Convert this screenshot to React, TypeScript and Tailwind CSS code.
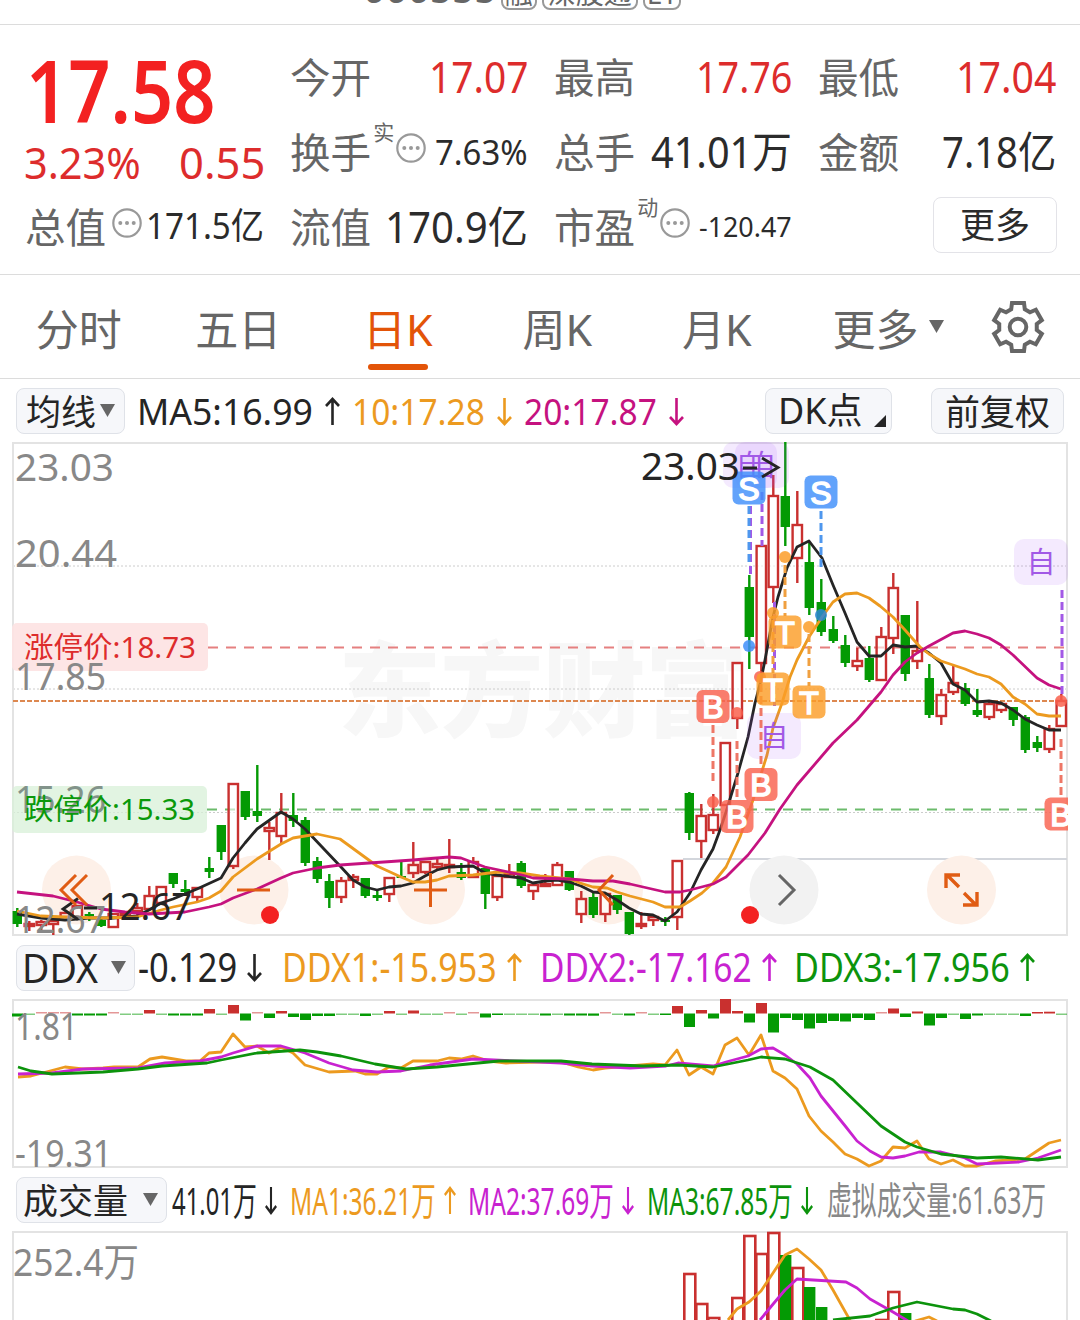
import { useLayoutEffect, useRef, useState } from "react";
import type { ReactNode } from "react";
import clsx from "clsx";

const RED = "#c9302f";
const GREEN = "#049a04";
const BLACK = "#252525";
const ORANGE = "#ec9a1f";
const MAGENTA = "#c5127f";
const VIOLET = "#c822d0";
const DEEP_GREEN = "#0c930c";

const STEP = 12;
const cx = (i: number) => 17.3 + i * STEP;

// [up, body top, body bottom, high, low]
const candles: [number, number, number, number, number][] = [
  [0, 911, 924, 908, 927], [1, 924, 926, 921, 931], [1, 922, 925, 920, 930], [1, 921, 924, 920, 935],
  [1, 913, 917, 913, 917], [1, 906, 917, 906, 917], [0, 914, 916, 912, 921], [0, 920, 926, 917, 927],
  [1, 914, 927, 914, 927], [1, 913, 915, 911, 917], [1, 908, 911, 903, 915], [1, 896, 909, 886, 910],
  [1, 887, 903, 887, 903], [0, 873, 884, 873, 888], [0, 889, 892, 880, 896], [1, 888, 897, 888, 902],
  [0, 868, 872, 857, 878], [0, 825, 852, 825, 860], [1, 784, 866, 784, 869], [0, 791, 817, 791, 820],
  [0, 811, 816, 765, 822], [1, 828, 831, 822, 860], [1, 813, 836, 793, 843], [0, 815, 821, 793, 827],
  [0, 820, 863, 817, 866], [0, 861, 879, 857, 883], [0, 881, 898, 874, 908], [1, 881, 897, 877, 903],
  [1, 877, 880, 874, 888], [0, 878, 896, 878, 898], [0, 895, 898, 891, 901], [1, 878, 894, 878, 902],
  [0, 876, 878, 862, 878], [1, 865, 873, 842, 878], [1, 862, 872, 862, 874], [1, 864, 867, 859, 870],
  [1, 865, 867, 839, 873], [0, 872, 878, 863, 880], [1, 862, 877, 857, 877], [0, 868, 894, 868, 909],
  [1, 876, 897, 876, 901], [1, 874, 877, 864, 877], [0, 863, 886, 861, 888], [1, 885, 891, 883, 900],
  [1, 884, 886, 874, 887], [1, 865, 885, 862, 885], [0, 871, 890, 871, 891], [1, 899, 914, 891, 923],
  [0, 897, 915, 892, 918], [1, 894, 914, 893, 922], [0, 895, 910, 895, 914], [0, 912, 934, 912, 935],
  [1, 924, 926, 912, 929], [1, 917, 920, 917, 926], [0, 920, 922, 917, 926], [1, 861, 917, 861, 930],
  [0, 793, 833, 792, 840], [1, 816, 841, 804, 858], [1, 815, 830, 794, 834], [1, 743, 805, 743, 805],
  [1, 663, 718, 663, 729], [0, 587, 637, 575, 669], [1, 546, 663, 546, 680], [1, 496, 587, 475, 603],
  [0, 496, 527, 442, 546], [1, 525, 558, 491, 583], [0, 562, 608, 543, 615], [0, 602, 632, 579, 636],
  [0, 629, 641, 616, 643], [0, 645, 663, 635, 667], [1, 661, 666, 648, 671], [0, 658, 680, 646, 682],
  [1, 637, 680, 627, 680], [1, 588, 638, 573, 654], [0, 615, 674, 615, 681], [1, 651, 661, 601, 669],
  [0, 678, 715, 664, 718], [1, 695, 716, 689, 725], [1, 683, 692, 666, 695], [0, 688, 704, 683, 706],
  [0, 710, 715, 689, 717], [1, 704, 717, 701, 720], [1, 704, 710, 704, 713], [0, 707, 720, 707, 726],
  [0, 717, 750, 715, 753], [0, 742, 748, 736, 752], [1, 729, 749, 725, 753], [1, 701, 726, 694, 727],
];

const ma5 =
  "17,914 41,918 65,920 89,918 113,918 137,916 149,910 161,903 173,899 197,889 221,878 233,858 245,843 257,829 281,812 293,819 305,829 341,867 353,880 365,887 377,890 389,887 401,886 413,883 425,876 437,870 449,867 473,866 485,873 497,875 521,878 533,883 545,881 557,880 569,882 581,886 593,892 605,893 617,900 629,908 641,914 653,915 665,921 677,912 690,893 701,870 713,849 720,830 726,812 738,773 748,737 755,703 761,680 765,660 773,617 778,597 787,568 797,547 809,541 822,558 833,585 845,613 857,642 869,656 881,656 893,645 905,647 917,646 929,653 941,663 953,684 965,690 977,702 989,701 1001,703 1013,710 1025,719 1037,725 1049,730 1061,730";
const ma10 =
  "17,911 41,916 65,917 101,918 137,917 161,910 173,907 197,902 209,898 221,891 233,877 257,859 281,844 293,838 317,834 340,839 377,866 401,877 413,882 425,882 437,880 449,876 473,875 498,872 520,873 540,876 570,879 580,883 593,887 607,888 617,892 630,896 653,902 665,907 680,907 690,901 702,893 713,883 726,867 740,837 753,800 767,755 773,728 782,703 790,677 797,660 809,637 822,617 833,602 845,594 857,593 869,598 880,606 893,617 905,630 920,647 929,654 941,661 965,669 977,674 989,677 1001,684 1013,697 1025,704 1037,714 1049,716 1061,716";
const ma20 =
  "17,892 53,896 77,902 101,909 125,912 149,914 185,912 209,907 221,904 233,898 257,889 281,878 293,873 317,868 340,865 413,860 449,857 461,858 485,867 522,875 533,878 570,879 593,881 613,881 630,884 665,892 680,892 690,890 713,884 726,877 748,855 765,833 780,809 797,785 833,743 857,720 881,692 893,675 905,662 917,653 929,646 953,633 965,631 977,634 989,638 1001,645 1013,655 1037,678 1049,685 1061,689";

// one entry per day, positive bars grow upwards
const ddxBars = [
  -3, -1, 1, 1, 1, -2, -2, -2, 1, -1, -1, 3.5, -1, -2, -2, -2, 4.5, -1, 8.5, -7, 1, -4.5, 2.5, -3.5, -6.5, -2.5,
  -2.5, -1, -1, -2.5, -1, 2.5, -1, 3, -1, -1, 1, -1, 1.2, -4, -1.5, -1, -1, -1, -2, -1, -2, -2, -2.2, 1, -1, -2, 1,
  -1, -1.5, 7.5, -13.5, 3.5, -5, 14.5, 2.5, -9, 10.5, -19, -4.5, -6.5, -15, -9.5, -7.5, -8, -4.5, -6.5, 1, 5, -3.5,
  2, -12, -4.5, -1, -5.5, -2, -1, -1, -1, -2.5, 1.5, 1.8, -1,
];

const ddx1 =
  "18,1077 31,1076 65,1067 83,1069 103,1068 114,1067 138,1067 150,1059 162,1057 186,1061 200,1061 209,1053 221,1052 233,1034 245,1047 257,1046 269,1053 281,1047 293,1053 305,1065 329,1072 355,1071 365,1074 377,1074 389,1067 401,1068 413,1061 437,1061 449,1058 461,1059 473,1056 489,1061 506,1063 540,1062 561,1062 578,1067 593,1070 605,1068 653,1064 665,1065 677,1050 689,1075 701,1067 713,1074 725,1045 737,1038 749,1055 761,1035 773,1071 785,1078 797,1089 809,1116 821,1131 833,1142 845,1154 857,1159 869,1166 881,1161 893,1147 905,1148 917,1141 929,1159 941,1164 953,1160 965,1166 977,1166 995,1161 1025,1159 1037,1151 1049,1143 1061,1140";
const ddx2 =
  "18,1074 52,1073 83,1069 138,1068 165,1063 200,1061 221,1057 233,1053 257,1046 281,1046 305,1053 329,1063 353,1070 377,1072 401,1071 430,1065 473,1059 540,1062 561,1063 592,1066 630,1068 666,1066 678,1063 713,1066 726,1062 748,1056 761,1049 773,1048 785,1055 797,1064 810,1078 821,1096 846,1127 857,1141 870,1151 881,1157 893,1158 905,1156 919,1152 941,1152 965,1158 977,1164 1019,1162 1038,1158 1061,1150";
const ddx3 =
  "18,1067 31,1071 52,1074 103,1072 138,1069 162,1066 207,1063 221,1060 257,1053 300,1050 317,1052 341,1056 375,1064 406,1069 437,1067 499,1061 561,1061 592,1064 643,1066 678,1065 713,1067 748,1060 761,1057 785,1059 810,1067 833,1080 857,1103 881,1126 905,1142 917,1147 941,1154 977,1158 1001,1157 1038,1160 1061,1157";

// [day index, up, bar top]
const volumes: [number, number, number][] = [
  [56, 1, 1274], [57, 1, 1304], [58, 1, 1318], [60, 1, 1298], [61, 1, 1236], [62, 1, 1254], [63, 1, 1233],
  [64, 0, 1255], [65, 1, 1268], [66, 0, 1287], [67, 0, 1307], [72, 1, 1320], [73, 1, 1292], [74, 0, 1313],
];

// Squeezes or stretches a run of text to the given width.
const Fit = ({ w, className, children }: { w: number; className?: string; children: ReactNode }) => {
  const ref = useRef<HTMLSpanElement>(null);
  const [scale, setScale] = useState(1);
  useLayoutEffect(() => {
    if (ref.current) setScale(w / ref.current.offsetWidth);
  }, [w]);
  return (
    <span className={clsx("inline-block shrink-0", className)} style={{ width: w }}>
      <span ref={ref} className="mb-[3px] inline-block origin-left whitespace-nowrap" style={{ transform: `scaleX(${scale})` }}>
        {children}
      </span>
    </span>
  );
};

const Info = () => (
  <svg width="30" height="30" viewBox="0 0 30 30" className="shrink-0">
    <circle cx="15" cy="15" r="13.7" fill="none" stroke="#999" strokeWidth="2.2" />
    {[8.3, 15, 21.7].map((x) => (
      <circle key={x} cx={x} cy="15" r="2" fill="#999" />
    ))}
  </svg>
);

const Triangle = ({ className }: { className?: string }) => (
  <svg width="15" height="13" viewBox="0 0 15 13" className={className}>
    <path d="M0 0H15L7.5 13Z" fill="#666" />
  </svg>
);

const Arrow = ({ up, w = 15, color }: { up?: boolean; w?: number; color: string }) => (
  <svg width={w} height="30" viewBox="0 0 15 30" preserveAspectRatio="none" className="shrink-0">
    <path
      d={up ? "M7.5 28V2M1 9L7.5 2L14 9" : "M7.5 1V27M1 20L7.5 27L14 20"}
      fill="none"
      stroke={color}
      strokeWidth="2.6"
    />
  </svg>
);

const Gear = () => {
  const pts: string[] = [];
  for (let k = 0; k < 6; k++) {
    for (const [r, off] of [[19, -21], [24.8, -14], [24.8, 14], [19, 21]]) {
      const a = ((k * 60 + off - 90) * Math.PI) / 180;
      pts.push(`${27 + r * Math.cos(a)},${27 + r * Math.sin(a)}`);
    }
  }
  return (
    <svg width="54" height="54" viewBox="0 0 54 54" fill="none" stroke="#666" strokeWidth="4">
      <polygon points={pts.join(" ")} />
      <circle cx="27" cy="27" r="8.3" />
    </svg>
  );
};

const Label = ({ children }: { children: string }) => (
  <span className="shrink-0 pt-[2px] text-[40.6px] text-[#666]">{children}</span>
);

const Pill = ({ className, children }: { className?: string; children: ReactNode }) => (
  <div className={clsx("flex h-[46px] shrink-0 items-center rounded-lg border border-[#dfe2e8] bg-[#f6f7fa] text-[#252525]", className)}>
    {children}
  </div>
);

const Line = ({ points, color }: { points: string; color: string }) => (
  <polyline points={points} fill="none" stroke={color} strokeWidth="2.8" strokeLinejoin="round" />
);

const AxisText = ({ x = 15, y, w, color = "#888", children }: { x?: number; y: number; w: number; color?: string; children: string }) => (
  <text x={x} y={y} fontSize="39" fill={color} textLength={w} lengthAdjust="spacingAndGlyphs">
    {children}
  </text>
);

const Stem = ({ x, y1, y2, color }: { x: number; y1: number; y2: number; color: string }) => (
  <line x1={x} x2={x} y1={y1} y2={y2} stroke={color} strokeWidth="3" strokeDasharray="8 4" />
);

const marks = [
  { t: "B", x: 713, y: 706.5, color: "#f9624e" },
  { t: "B", x: 761, y: 784.5, color: "#f9624e" },
  { t: "B", x: 737, y: 816.5, color: "#f9624e" },
  { t: "B", x: 1061, y: 814, color: "#f9624e" },
  { t: "S", x: 749, y: 488, color: "#3f8ffa" },
  { t: "S", x: 821, y: 492, color: "#3f8ffa" },
  { t: "T", x: 785, y: 632, color: "#fb9d28" },
  { t: "T", x: 773, y: 689, color: "#fb9d28" },
  { t: "T", x: 809, y: 702, color: "#fb9d28" },
];

const dots: [number, number, string][] = [
  [749, 646, "#3f8ffa"], [821, 615, "#2f86d8"], [785, 557, "#fb9d28"], [773, 613, "#fb9d28"], [809, 627, "#fb9d28"],
  [713, 802, "#f9624e"], [737, 713, "#f9624e"], [760, 677, "#f9624e"], [1061, 701, "#f9624e"],
];

const SelfTag = ({ x, y }: { x: number; y: number }) => (
  <g>
    <rect x={x - 27} y={y - 23} width="54" height="46" rx="10" fill="#a855f7" fillOpacity="0.12" />
    <text x={x} y={y + 11} fontSize="29" textAnchor="middle" fill="#a259e6">自</text>
  </g>
);

const KChart = () => (
  <svg className="ml-3 block shrink-0" width="1056" height="494" viewBox="12 442 1056 494">
    <text x="338" y="729" fontSize="103" fontWeight="900" fill="#f7f7f7" textLength="410">东方财富</text>
    <g stroke="#ccc" strokeDasharray="2 2">
      <path d="M13 566H1067M13 689H1067M13 812.5H1067" />
    </g>
    <rect x="13" y="443" width="1054" height="492" fill="none" stroke="#e3e3e3" strokeWidth="2" />
    <path d="M683 859H1067" stroke="#d3d6dc" strokeWidth="2" />
    {[76.5, 254, 430.5, 608.5, 961.5].map((x) => (
      <circle key={x} cx={x} cy="890" r="34.5" fill="#fdf0e8" />
    ))}
    <circle cx="784" cy="890" r="34.5" fill="#f2f2f2" />

    <path d="M208 647.5H1067" stroke="#e58080" strokeWidth="1.8" strokeDasharray="10 8" />
    <path d="M207 809.5H1067" stroke="#6cbb6c" strokeWidth="1.8" strokeDasharray="10 8" />
    <path d="M13 701H1067" stroke="#dd8850" strokeWidth="2" strokeDasharray="5 2" />

    {candles.map(([up, top, bottom, high, low], i) => {
      const x = cx(i);
      return up ? (
        <g key={i} stroke={RED} strokeWidth="2.4" fill="#fff">
          <path d={`M${x} ${high}V${top}M${x} ${bottom}V${low}`} />
          <rect x={x - 4.7} y={top} width="9.4" height={bottom - top} fillOpacity="0.6" />
        </g>
      ) : (
        <g key={i} fill={GREEN}>
          <rect x={x - 1.2} y={high} width="2.4" height={low - high} />
          <rect x={x - 4.7} y={top} width="9.4" height={bottom - top} />
        </g>
      );
    })}

    <Line points={ma5} color={BLACK} />
    <Line points={ma10} color={ORANGE} />
    <Line points={ma20} color={MAGENTA} />

    <rect x="12" y="623" width="196" height="48" rx="5" fill="#fde3e3" fillOpacity="0.92" />
    <text x="24" y="658" fontSize="29" fill="#dd2c2c" textLength="172" lengthAdjust="spacingAndGlyphs">涨停价:18.73</text>
    <rect x="12" y="786" width="195" height="47" rx="5" fill="#d8f0d8" fillOpacity="0.75" />
    <AxisText y={481} w={99}>23.03</AxisText>
    <AxisText y={567} w={102}>20.44</AxisText>
    <AxisText y={690} w={91}>17.85</AxisText>
    <AxisText y={813} w={91} color="#82938a">15.26</AxisText>
    <AxisText y={933} w={91}>12.67</AxisText>
    <text x="24" y="820" fontSize="29" fill="#0a990a" textLength="171" lengthAdjust="spacingAndGlyphs">跌停价:15.33</text>

    <SelfTag x={750} y={465} />
    <SelfTag x={762} y={465} />
    <SelfTag x={774} y={736} />
    <SelfTag x={1041} y={562} />
    <Stem x={750.5} y1={506} y2={578} color="#a259e6" />
    <Stem x={762} y1={492} y2={546} color="#a259e6" />
    <Stem x={774.5} y1={602} y2={706} color="#a259e6" />
    <Stem x={1062} y1={590} y2={694} color="#a259e6" />
    <Stem x={749} y1={506} y2={565} color="#4f97ee" />
    <Stem x={821} y1={511} y2={568} color="#4f97ee" />
    <Stem x={785} y1={565} y2={616} color="#f0a040" />
    <Stem x={773} y1={620} y2={673} color="#f0a040" />
    <Stem x={809} y1={634} y2={686} color="#f0a040" />
    <Stem x={713} y1={725} y2={784} color="#ee7766" />
    <Stem x={737} y1={741} y2={800} color="#ee7766" />
    <Stem x={761} y1={684} y2={768} color="#ee7766" />
    <Stem x={1061} y1={739} y2={798} color="#ee7766" />
    {dots.map(([x, y, color]) => (
      <circle key={`${x}-${y}`} cx={x} cy={y} r="6" fill={color} fillOpacity="0.85" />
    ))}
    {marks.map(({ t, x, y, color }) => (
      <g key={`${x}-${y}`}>
        <rect x={x - 16.5} y={y - 16.5} width="33" height="33" rx="6" fill={color} fillOpacity="0.82" />
        <text x={x} y={y + 11.5} fontSize="32" fill="#fff" stroke="#fff" strokeWidth="1.6" textAnchor="middle" className="font-['Liberation_Sans',sans-serif]">
          {t}
        </text>
      </g>
    ))}

    <AxisText x={641} y={480} w={99} color={BLACK}>23.03</AxisText>
    <path d="M743 468H757M762 458L778 467.5L762 477" fill="none" stroke={BLACK} strokeWidth="2.8" />
    <AxisText x={99} y={920} w={93} color={BLACK}>12.67</AxisText>
    <path d="M84 908H97M78 898.500L63 909L78 919.500" fill="none" stroke={BLACK} strokeWidth="2.8" />

    <g fill="none" stroke="#e05c14" strokeWidth="3">
      <path d="M76 875L61 890L76 905M87 875L72 890L87 905" />
      <path d="M237 890H270M414 890H447M430.500 873V907M613 875L599 890L613 905" />
      <path d="M946 888V875H960M947 875L959 887M964 893L976 905M977 892V905H963" strokeWidth="3.4" />
    </g>
    <path d="M779 875L794 890L779 905" fill="none" stroke="#666" strokeWidth="3" />
    <circle cx="270" cy="915" r="9" fill="#f32121" />
    <circle cx="750" cy="915" r="9" fill="#f32121" />
  </svg>
);

const DdxChart = () => (
  <svg className="ml-3 block shrink-0" width="1056" height="169" viewBox="12 999 1056 169">
    <rect x="13" y="1000" width="1054" height="167" fill="none" stroke="#e3e3e3" strokeWidth="2" />
    {ddxBars.map((v, i) => {
      const h = Math.max(Math.abs(v), 1.5);
      return (
        <rect
          key={i}
          x={cx(i) - 5.3}
          y={v > 0 ? 1013.5 - h : 1013.5}
          width="11"
          height={h}
          fill={v > 0 ? RED : GREEN}
          fillOpacity={Math.abs(v) < 1.5 ? 0.5 : 1}
        />
      );
    })}
    <AxisText y={1040} w={63}>1.81</AxisText>
    <AxisText y={1167} w={97}>-19.31</AxisText>
    <Line points={ddx1} color={ORANGE} />
    <Line points={ddx2} color={VIOLET} />
    <Line points={ddx3} color={DEEP_GREEN} />
  </svg>
);

const VolumeChart = () => (
  <svg className="ml-3 block shrink-0" width="1056" height="89" viewBox="12 1231 1056 89">
    <rect x="13" y="1232" width="1054" height="120" fill="none" stroke="#e3e3e3" strokeWidth="2" />
    <AxisText x={13} y={1276} w={126}>252.4万</AxisText>
    {volumes.map(([i, up, top]) => (
      <rect
        key={i}
        x={cx(i) - (up ? 5 : 5.3)}
        y={top}
        width={up ? 11 : 11.4}
        height="100"
        fill={up ? "#fff" : GREEN}
        stroke={up ? RED : "none"}
        strokeWidth="2.6"
      />
    ))}
    <Line points="728,1320 737,1309 749,1302 761,1291 773,1273 785,1255 797,1249 809,1259 821,1270 833,1290 851,1322" color={ORANGE} />
    <Line points="915,1321 929,1317 937,1321" color={ORANGE} />
    <Line points="760,1320 774,1303 785,1290 797,1279 846,1282 857,1288 870,1299 893,1312 908,1321" color={VIOLET} />
    <Line points="833,1320 870,1316 893,1308 917,1302 953,1309 965,1310 977,1314 991,1321" color={DEEP_GREEN} />
  </svg>
);

const App = () => (
  <div className="flex h-[1320px] w-[1080px] flex-col overflow-hidden bg-white font-['Noto_Sans','Noto_Sans_CJK_SC',sans-serif] leading-none text-[#2b2b2b]">
    <header className="flex h-[25px] shrink-0 items-end justify-center overflow-hidden border-b border-[#dcdcdc] pb-[14px] text-[#666]">
      <div className="flex items-end gap-[5px] pr-[36px]">
        <Fit w={133} className="text-[38px]">000555</Fit>
        <span className="rounded-lg border-2 border-[#999] px-[2px] pb-[1px] text-[28px]">融</span>
        <span className="rounded-lg border-2 border-[#999] px-[4px] pb-[1px] text-[28px]">深股通</span>
        <span className="rounded-lg border-2 border-[#999] px-[2px] pb-[1px] text-[28px]">L1</span>
      </div>
    </header>

    <section className="flex h-[250px] shrink-0 border-b border-[#dcdcdc] pt-[15px] pl-[26px]">
      <div className="w-[264px]">
        <div className="flex h-[93px] items-center pt-[9px]">
          <Fit w={190} className="text-[86px] font-semibold text-[#f32121]">17.58</Fit>
        </div>
        <div className="-ml-[2px] flex h-[57px] w-[241px] items-center justify-between pt-[4px] text-[44px] text-[#dd2c2c]">
          <Fit w={117}>3.23%</Fit>
          <Fit w={86}>0.55</Fit>
        </div>
        <div className="-ml-px flex h-[75px] w-[239px] items-center justify-between">
          <Label>总值</Label>
          <div className="pb-[9px] pl-[2px]"><Info /></div>
          <Fit w={118} className="text-[36px]">171.5亿</Fit>
        </div>
      </div>

      <div className="w-[264px]">
        <div className="flex h-[75px] w-[238px] items-center justify-between">
          <Label>今开</Label>
          <Fit w={99} className="text-[44px] text-[#dd2c2c]">17.07</Fit>
        </div>
        <div className="flex h-[75px] w-[238px] items-center">
          <Label>换手</Label>
          <span className="ml-[2px] pb-[40px] text-[21px] text-[#666]">实</span>
          <div className="ml-[2px] pb-[9px]"><Info /></div>
          <Fit w={93} className="ml-auto text-[35px]">7.63%</Fit>
        </div>
        <div className="flex h-[75px] w-[238px] items-center justify-between">
          <Label>流值</Label>
          <Fit w={143} className="text-[43px]">170.9亿</Fit>
        </div>
      </div>

      <div className="w-[264px]">
        <div className="flex h-[75px] w-[238px] items-center justify-between">
          <Label>最高</Label>
          <Fit w={96} className="text-[44px] text-[#dd2c2c]">17.76</Fit>
        </div>
        <div className="flex h-[75px] w-[238px] items-center justify-between">
          <Label>总手</Label>
          <Fit w={141} className="text-[43px]">41.01万</Fit>
        </div>
        <div className="flex h-[75px] w-[238px] items-center">
          <Label>市盈</Label>
          <span className="ml-[2px] pb-[40px] text-[21px] text-[#666]">动</span>
          <div className="ml-[2px] pb-[9px]"><Info /></div>
          <Fit w={93} className="ml-auto text-[28px]">-120.47</Fit>
        </div>
      </div>

      <div className="w-[238px]">
        <div className="flex h-[75px] items-center justify-between">
          <Label>最低</Label>
          <Fit w={100} className="text-[44px] text-[#dd2c2c]">17.04</Fit>
        </div>
        <div className="flex h-[75px] items-center justify-between">
          <Label>金额</Label>
          <Fit w={114} className="text-[43px]">7.18亿</Fit>
        </div>
        <div className="flex h-[75px] items-center justify-end">
          <button className="-mr-px mb-[6px] h-[56px] w-[124px] rounded-lg border border-[#e3e3e8] text-[35px]">更多</button>
        </div>
      </div>
    </section>

    <nav className="flex h-[104px] shrink-0 items-center border-b border-[#dcdcdc] text-[43px] text-[#666]">
      {["分时", "五日", "日K", "周K", "月K"].map((tab) => (
        <div
          key={tab}
          className={clsx("relative flex h-full w-[159.500px] items-center justify-center pt-[6px] pr-[2px]", tab === "日K" && "text-[#e35408]")}
        >
          {tab}
          {tab === "日K" && <span className="absolute bottom-[8px] left-[49px] h-[6px] w-[60px] rounded-full bg-[#e35408]" />}
        </div>
      ))}
      <div className="ml-[35px] flex items-center gap-[10px] pt-[6px]">
        更多
        <Triangle className="mb-[6px]" />
      </div>
      <div className="ml-[47px]"><Gear /></div>
    </nav>

    <div className="flex h-[63px] shrink-0 items-center pl-4 text-[37px]">
      <Pill className="w-[109px] gap-[4px] pl-[9px] text-[35px]">
        <span className="pt-[2px]">均线</span>
        <Triangle />
      </Pill>
      <div className="flex items-center gap-[12px] pt-[2px] pl-[12px]">
        <Fit w={176} className="text-[#252525]">MA5:16.99</Fit>
        <Arrow up color={BLACK} />
        <Fit w={133} className="text-[#ec9a1f]">10:17.28</Fit>
        <Arrow color={ORANGE} />
        <Fit w={133} className="text-[#c5127f]">20:17.87</Fit>
        <Arrow color={MAGENTA} />
      </div>
      <Pill className="ml-auto w-[127px] justify-between pr-[5px] pl-[12px] text-[36px]">
        <Fit w={85} className="pt-[3px]">DK点</Fit>
        <svg width="12" height="12" className="mt-[20px]"><path d="M12 0V12H0Z" fill={BLACK} /></svg>
      </Pill>
      <Pill className="mr-4 ml-[39px] w-[133px] justify-center pt-[2px] text-[35px]">前复权</Pill>
    </div>

    <KChart />

    <div className="flex h-[63px] shrink-0 items-center pl-4 text-[40px]">
      <Pill className="w-[119px] gap-[13px] pl-[5px]">
        <Fit w={76} className="pt-[3px]">DDX</Fit>
        <Triangle />
      </Pill>
      <div className="flex items-center gap-[10px] pt-[1px] pl-[3px]">
        <Fit w={99} className="text-[#252525]">-0.129</Fit>
        <Arrow color={BLACK} />
        <Fit w={215} className="ml-[10px] text-[#ec9a1f]">DDX1:-15.953</Fit>
        <Arrow up color={ORANGE} />
        <Fit w={212} className="ml-[8px] text-[#c822d0]">DDX2:-17.162</Fit>
        <Arrow up color={VIOLET} />
        <Fit w={216} className="ml-[7px] text-[#0c930c]">DDX3:-17.956</Fit>
        <Arrow up color={DEEP_GREEN} />
      </div>
    </div>

    <DdxChart />

    <div className="flex h-[63px] shrink-0 items-center pl-4 text-[39px]">
      <Pill className="w-[151px] gap-[15px] pl-[6px] text-[35px]">
        <span className="pt-[2px]">成交量</span>
        <Triangle />
      </Pill>
      <div className="flex items-center gap-[8px] pt-[2px] pl-[5px]">
        <Fit w={85} className="text-[#252525]">41.01万</Fit>
        <Arrow w={12} color={BLACK} />
        <Fit w={146} className="ml-[5px] text-[#ec9a1f]">MA1:36.21万</Fit>
        <Arrow up w={12} color={ORANGE} />
        <Fit w={146} className="ml-[4px] text-[#c822d0]">MA2:37.69万</Fit>
        <Arrow w={12} color={VIOLET} />
        <Fit w={146} className="ml-[5px] text-[#0c930c]">MA3:67.85万</Fit>
        <Arrow w={12} color={DEEP_GREEN} />
        <Fit w={219} className="ml-[6px] text-[38px] text-[#888]">虚拟成交量:61.63万</Fit>
      </div>
    </div>

    <VolumeChart />
  </div>
);

export default App;
